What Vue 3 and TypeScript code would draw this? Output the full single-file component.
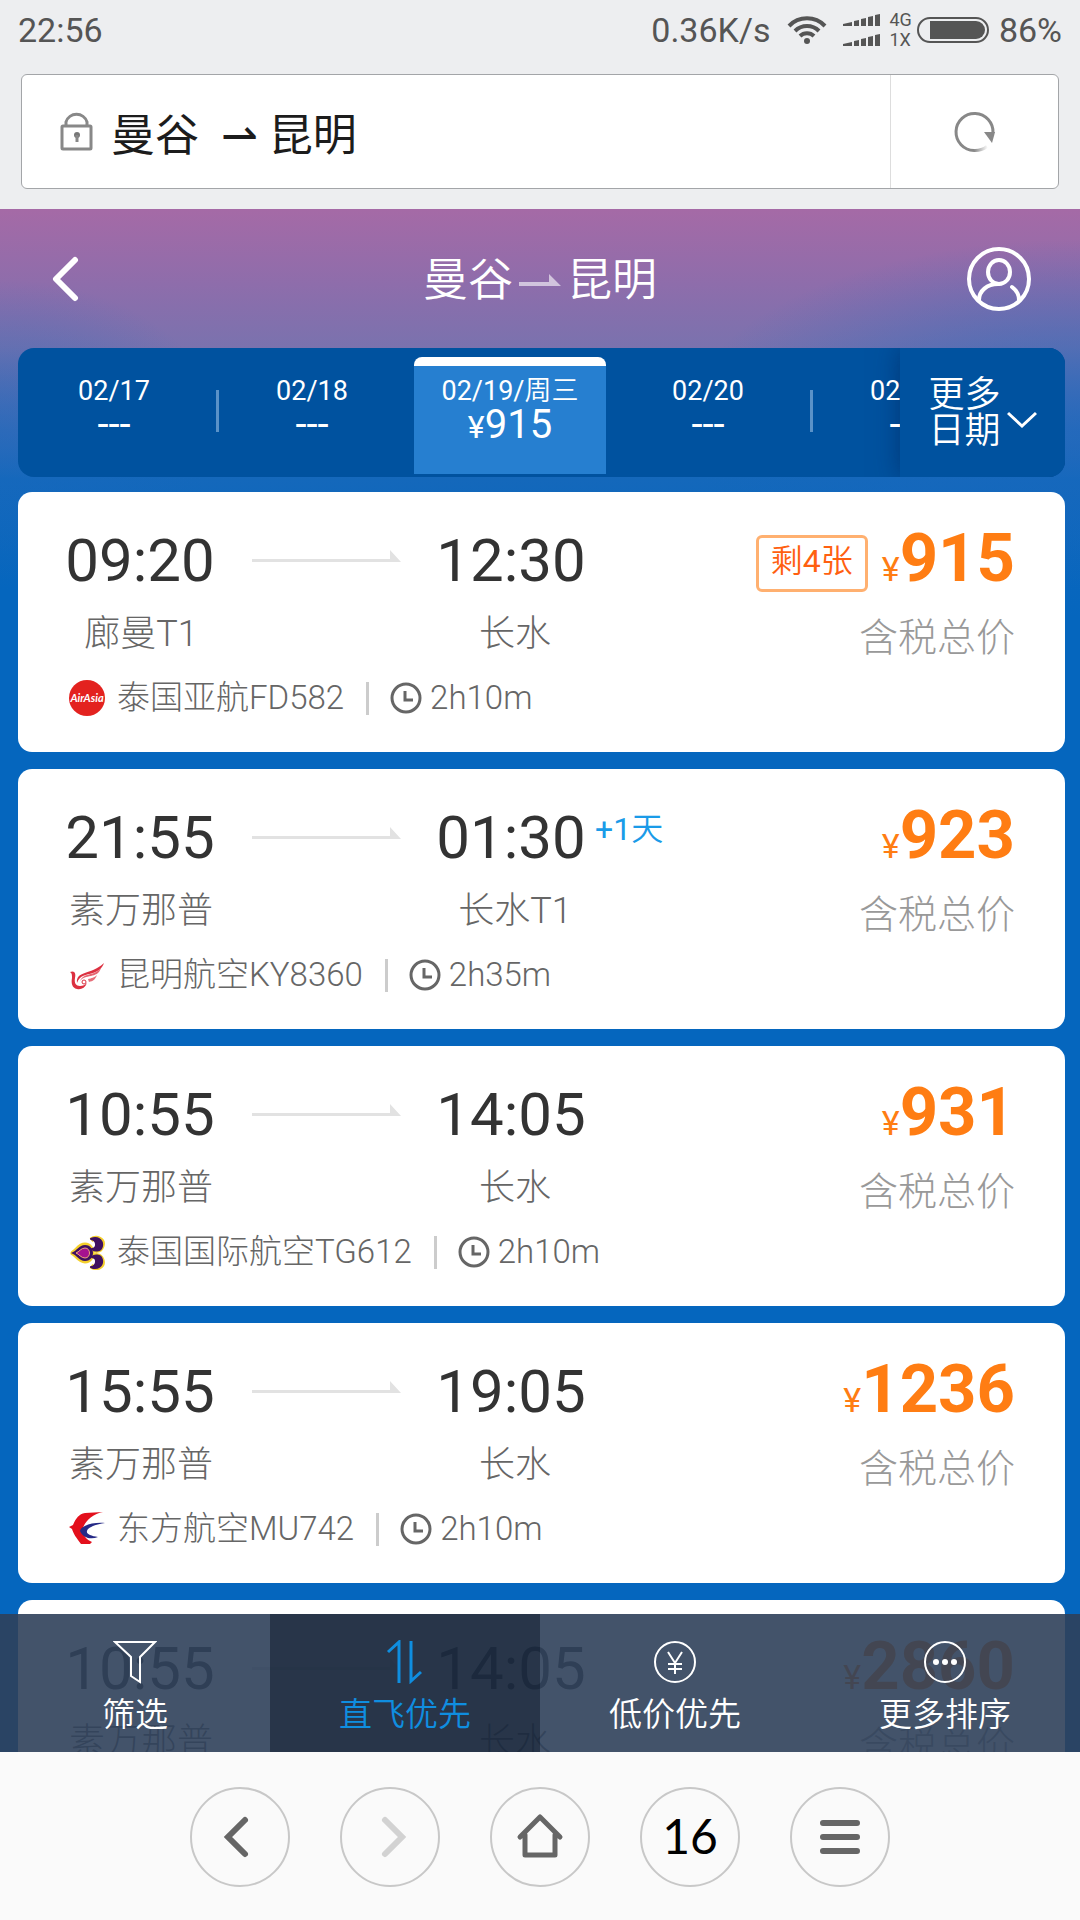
<script setup lang="ts">
import { ref } from 'vue'

type Airline = 'airasia' | 'kunming' | 'thai' | 'eastern'

interface Day {
  date: string
  price: number | null
  divider?: boolean
}

interface Flight {
  depart: string
  from: string
  arrive: string
  to: string
  plusDay?: string
  airline: string
  logo: Airline
  duration: string
  price: number
  left?: string
}

const address = ref('曼谷  ⇀ 昆明')
const activeDay = ref(2)
const activeSort = ref(1)

const days: Day[] = [
  { date: '02/17', price: null, divider: true },
  { date: '02/18', price: null },
  { date: '02/19/周三', price: 915 },
  { date: '02/20', price: null, divider: true },
  { date: '02/21', price: null },
]

const flights: Flight[] = [
  { depart: '09:20', from: '廊曼T1', arrive: '12:30', to: '长水', airline: '泰国亚航FD582', logo: 'airasia', duration: '2h10m', price: 915, left: '剩4张' },
  { depart: '21:55', from: '素万那普', arrive: '01:30', to: '长水T1', plusDay: '+1天', airline: '昆明航空KY8360', logo: 'kunming', duration: '2h35m', price: 923 },
  { depart: '10:55', from: '素万那普', arrive: '14:05', to: '长水', airline: '泰国国际航空TG612', logo: 'thai', duration: '2h10m', price: 931 },
  { depart: '15:55', from: '素万那普', arrive: '19:05', to: '长水', airline: '东方航空MU742', logo: 'eastern', duration: '2h10m', price: 1236 },
  { depart: '10:55', from: '素万那普', arrive: '14:05', to: '长水', airline: '泰国国际航空TG612', logo: 'thai', duration: '2h10m', price: 2860 },
]

const sorts = ['筛选', '直飞优先', '低价优先', '更多排序']
</script>

<template>
  <div class="screen">
    <header class="chrome">
      <div class="status">
        <span>22:56</span>
        <div class="status-right">
          <span>0.36K/s</span>
          <svg class="wifi" width="40" height="30" viewBox="0 0 40 30" fill="none" stroke="#555" stroke-width="4">
            <path d="M2 11a25 25 0 0 1 36 0" />
            <path d="M8 16a17 17 0 0 1 24 0" />
            <path d="M13 21a10 10 0 0 1 14 0" />
            <circle cx="20" cy="26" r="3" fill="#555" stroke="none" />
          </svg>
          <div class="signals">
            <svg v-for="n in 2" :key="n" width="38" height="12" viewBox="0 0 38 12" fill="#555">
              <path d="M0 12V10l9-2v4zM11 12V7l5-1v6zM18 12V5l5-1v8zM25 12V3l5-1v10zM32 12V1l5-1v12z" />
            </svg>
          </div>
          <div class="net"><span>4G</span><span>1X</span></div>
          <svg class="battery" width="72" height="28" viewBox="0 0 72 28">
            <rect x="1" y="2" width="70" height="24" rx="12" fill="none" stroke="#555" stroke-width="2" />
            <path d="M13 5h46a9 9 0 0 1 0 18H13z" fill="#555" />
          </svg>
          <span>86%</span>
        </div>
      </div>
      <div class="address">
        <svg class="lock" width="34" height="42" viewBox="0 0 34 42" fill="none" stroke="#888" stroke-width="3">
          <rect x="2" y="17" width="29" height="23" rx="1" />
          <path d="M6 17v-4a11 11 0 0 1 21 0v4" />
          <circle cx="17" cy="26" r="3" fill="#777" stroke="none" />
          <path d="M17 26v7" />
        </svg>
        <input v-model="address" type="text" aria-label="地址" />
        <button class="reload" type="button" aria-label="刷新">
          <svg width="42" height="42" viewBox="0 0 42 42" fill="none">
            <defs>
              <linearGradient id="fade" gradientUnits="userSpaceOnUse" x1="20" y1="0" x2="34" y2="0">
                <stop offset="0" stop-color="#888" />
                <stop offset="1" stop-color="#888" stop-opacity="0" />
              </linearGradient>
            </defs>
            <path d="M39 22a18.500 18.500 0 1 0-19 17.500" stroke="#888" stroke-width="3" />
            <path d="M20 39.500a20 20 0 0 0 13-4" stroke="url(#fade)" stroke-width="3" />
            <path d="M30 21h11l-1 4-2 7z" fill="#888" />
          </svg>
        </button>
      </div>
    </header>

    <main class="page">
      <div class="title-bar">
        <button class="back" type="button" aria-label="返回">
          <svg width="28" height="46" viewBox="0 0 28 46" fill="none" stroke="#fff" stroke-width="6" stroke-linecap="round" stroke-linejoin="round">
            <path d="M23 4L4 23l19 19" />
          </svg>
        </button>
        <h1>
          <span>曼谷</span>
          <svg width="42" height="14" viewBox="0 0 42 14" fill="#fff" opacity="0.6">
            <path d="M0 9h30V1l12 12H0z" />
          </svg>
          <span>昆明</span>
        </h1>
        <button class="user" type="button" aria-label="我的">
          <svg width="66" height="66" viewBox="0 0 66 66" fill="none" stroke="#fff" stroke-width="4" stroke-linecap="round">
            <circle cx="33" cy="33" r="30" />
            <ellipse cx="33" cy="26" rx="11" ry="12" />
            <path d="M13 54c0-9 8-16 19-16M46 41c4 3 7 8 7 13" />
          </svg>
        </button>
      </div>

      <nav class="dates" aria-label="日期">
        <div class="strip">
          <button
            v-for="(d, i) in days"
            :key="d.date"
            type="button"
            class="day"
            :class="{ active: i === activeDay, divided: d.divider }"
            @click="activeDay = i"
          >
            <span class="day-date">{{ d.date }}</span>
            <span v-if="d.price" class="day-price"><small>¥</small>{{ d.price }}</span>
            <span v-else class="day-price">---</span>
          </button>
        </div>
        <button class="more" type="button">
          <span>更多<br />日期</span>
          <svg width="30" height="18" viewBox="0 0 30 18" fill="none" stroke="#fff" stroke-width="3">
            <path d="M1 2l14 13L29 2" />
          </svg>
        </button>
      </nav>

      <section class="list">
        <article v-for="(f, i) in flights" :key="i" class="card">
          <div class="trip">
            <div class="route">
              <div class="stop">
                <span class="time">{{ f.depart }}</span>
                <span class="port">{{ f.from }}</span>
              </div>
              <svg class="line" width="150" height="14" viewBox="0 0 150 14" fill="#e2e2e2">
                <path d="M0 9h138V0l11 12H0z" />
              </svg>
              <div class="stop arrival">
                <span class="time">{{ f.arrive }}</span>
                <span class="port">{{ f.to }}</span>
              </div>
              <span v-if="f.plusDay" class="plus">{{ f.plusDay }}</span>
            </div>
            <div class="carrier">
              <svg v-if="f.logo === 'airasia'" class="logo" viewBox="0 0 36 36">
                <circle cx="18" cy="18" r="18" fill="#e3221f" />
                <text x="18" y="22" text-anchor="middle" font-family="Lato, sans-serif" font-size="11" font-style="italic" font-weight="700" fill="#fff">AirAsia</text>
              </svg>
              <svg v-else-if="f.logo === 'kunming'" class="logo" viewBox="0 0 36 36" fill="#dc3040">
                <path d="M1 15c5-2 6 2 5 6-1 5 1 8 5 8 3 0 5-1 7-3-2 5-6 7-10 6-5-1-6-6-5-11 0-3 0-5-2-6z" />
                <path d="M8 26c-1-13 13-7 27-20-2 6-6 8-11 10-7 2-13 2-16 10z" />
                <path d="M11 24c4-9 13-4 21-13-2 6-6 7-10 8-5 1-8 1-11 5z" opacity="0.75" />
                <path d="M19 22c4-1 6-1 9-4-2 5-4 6-8 7z" opacity="0.7" />
                <circle cx="15" cy="25" r="2" fill="none" stroke="#dc3040" stroke-width="1" />
              </svg>
              <svg v-else-if="f.logo === 'thai'" class="logo" viewBox="0 0 36 36">
                <g stroke="#f4cf2c" stroke-width="5" stroke-linejoin="round" fill="#f4cf2c">
                  <path d="M4 19c4-2 6-8 12-8 5 0 7 5 7 8s-2 8-7 8c-6 0-8-6-12-8z" />
                  <path d="M22 6c6-4 13 0 11 6s-8 5-9 2M22 32c6 4 13 0 11-6s-8-5-9-2" fill="none" />
                </g>
                <path d="M2 19c6-2 8-8 14-8 6 0 8 5 8 8s-2 8-8 8c-6 0-8-6-14-8z" fill="#3f1060" />
                <path d="M22 5c6-3 12 1 11 7s-8 5-10 3c6-1 5-9-1-10zM22 33c6 3 12-1 11-7s-8-5-10-3c6 1 5 9-1 10z" fill="#3f1060" stroke="#3f1060" stroke-width="2" stroke-linejoin="round" />
                <path d="M7 19c3-1 5-5 9-5 6 0 6 10 0 10-4 0-6-4-9-5z" fill="#a5128f" stroke="#f0a878" stroke-width="1" />
              </svg>
              <svg v-else class="logo" viewBox="0 0 36 36">
                <path d="M0 16l4-2C7 7 10 3 16 2l18-1c-10 2-18 9-20 16-1 6 3 12 9 14l-2 2h-9C8 28 4 22 3 18z" fill="#e3101c" />
                <path d="M36 12c-13-1-24 3-25 8 3 7 11 9 18 6-7-1-12-3-11-6 1-4 10-7 18-8z" fill="#262a86" />
              </svg>
              <span class="flight">{{ f.airline }}</span>
              <i class="bar"></i>
              <svg width="32" height="32" viewBox="0 0 32 32" fill="none" stroke="#666" stroke-width="3">
                <circle cx="16" cy="16" r="14" />
                <path d="M15 9v9h8" />
              </svg>
              <span class="duration">{{ f.duration }}</span>
            </div>
          </div>
          <div class="fare">
            <div class="fare-row">
              <span v-if="f.left" class="left">{{ f.left }}</span>
              <span class="price"><small>¥</small>{{ f.price }}</span>
            </div>
            <span class="tax">含税总价</span>
          </div>
        </article>
      </section>

      <nav class="sorts" aria-label="排序">
        <button
          v-for="(s, i) in sorts"
          :key="s"
          type="button"
          class="sort"
          :class="{ active: i === activeSort }"
          @click="activeSort = i"
        >
          <svg width="44" height="44" viewBox="0 0 44 44" fill="none" stroke="currentColor" stroke-width="2">
            <path v-if="i === 0" d="M2 2h40L27 17v25l-9-6V17z" />
            <path v-else-if="i === 1" d="M5 12L16 2v41M28 1v40l10-9" stroke-width="3" />
            <template v-else-if="i === 2">
              <circle cx="22" cy="22" r="20" />
              <path d="M15 12l7 11 7-11M22 23v11M15 24h14M15 29h14" />
            </template>
            <template v-else>
              <circle cx="22" cy="22" r="20" />
              <g fill="currentColor" stroke="none">
                <circle cx="13" cy="22" r="3" />
                <circle cx="22" cy="22" r="3" />
                <circle cx="31" cy="22" r="3" />
              </g>
            </template>
          </svg>
          <span>{{ s }}</span>
        </button>
      </nav>
    </main>

    <footer class="tools">
      <button type="button" aria-label="后退">
        <svg width="44" height="44" viewBox="0 0 44 44" fill="none" stroke="#666" stroke-width="6" stroke-linecap="round">
          <path d="M27 5L10 22l17 17" />
        </svg>
      </button>
      <button type="button" aria-label="前进" disabled>
        <svg width="44" height="44" viewBox="0 0 44 44" fill="none" stroke="#d2d2d2" stroke-width="6" stroke-linecap="round">
          <path d="M17 5l17 17-17 17" />
        </svg>
      </button>
      <button type="button" aria-label="主页">
        <svg width="48" height="48" viewBox="0 0 48 48" fill="none" stroke="#666" stroke-width="5" stroke-linecap="round" stroke-linejoin="round">
          <path d="M4 24L24 4l20 20M9 22v20h30V22" />
        </svg>
      </button>
      <button type="button" class="tabs" aria-label="标签页 16">16</button>
      <button type="button" aria-label="菜单">
        <svg width="44" height="44" viewBox="0 0 44 44" fill="none" stroke="#666" stroke-width="6" stroke-linecap="round">
          <path d="M5 8h34M5 22h34M5 36h34" />
        </svg>
      </button>
    </footer>
  </div>
</template>

<style>
body {
  margin: 0;
}
</style>

<style scoped>
.screen {
  display: flex;
  flex-direction: column;
  height: 100vh;
  overflow: hidden;
  background: #fafafa;
  font-family: Roboto, 'Noto Sans CJK SC', sans-serif;
  color: #333;
}

button,
input {
  margin: 0;
  padding: 0;
  border: 0;
  background: none;
  color: inherit;
  font: inherit;
}

svg {
  display: block;
  flex: none;
}

.chrome {
  flex: none;
  padding-bottom: 20px;
  background: #edeef0;
}

.status {
  display: flex;
  justify-content: space-between;
  align-items: center;
  height: 60px;
  margin-bottom: 14px;
  padding: 0 18px;
  color: #555;
  font-size: 34px;
}

.status-right {
  display: flex;
  align-items: center;
}

.wifi {
  margin: 0 16px 0 17px;
}

.signals {
  display: flex;
  flex-direction: column;
  gap: 8px;
}

.net {
  display: flex;
  flex-direction: column;
  margin: 0 5px 0 8px;
  font-size: 18px;
  line-height: 20px;
}

.battery {
  margin-right: 10px;
}

.address {
  display: flex;
  align-items: center;
  box-sizing: border-box;
  height: 115px;
  margin: 0 21px;
  padding-left: 38px;
  border: 1px solid #a3a5a8;
  border-radius: 6px;
  background: #fff;
}

.lock {
  margin-bottom: 4px;
}

.address input {
  flex: 1;
  min-width: 0;
  height: 100%;
  margin-left: 17px;
  outline: none;
  color: #1c1c1c;
  font-size: 44px;
}

.reload {
  display: flex;
  align-items: center;
  justify-content: center;
  width: 168px;
  height: 100%;
  border-left: 1px solid #ddd;
}

.page {
  position: relative;
  display: flex;
  flex: 1;
  flex-direction: column;
  min-height: 0;
  overflow: hidden;
  background:
    radial-gradient(220px 150px at 0 220px, rgba(24, 104, 190, 0.5), transparent),
    radial-gradient(400px 190px at 100% 220px, rgba(24, 104, 190, 0.7), transparent),
    linear-gradient(#a56aa6 0, #8e6dab 75px, #7a72ae 139px, #4a6db4 210px, #1468bb 270px, #0566be 380px);
}

.title-bar {
  display: flex;
  flex: none;
  align-items: center;
  justify-content: space-between;
  height: 139px;
  padding: 0 48px 0 52px;
}

.back,
.user {
  width: 66px;
}

h1 {
  display: flex;
  align-items: center;
  gap: 6px;
  margin: 0 4px 4px 0;
  color: #fff;
  font-size: 45px;
  font-weight: 350;
}

h1 svg {
  margin-top: 6px;
}

.dates {
  display: flex;
  flex: none;
  height: 129px;
  margin: 0 15px 0 18px;
  overflow: hidden;
  border-radius: 16px;
  background: #00529f;
  color: #fff;
}

.strip {
  display: flex;
  flex: 1;
  gap: 6px;
  min-width: 0;
  overflow: hidden;
}

.day {
  position: relative;
  display: flex;
  flex: none;
  flex-direction: column;
  align-items: center;
  box-sizing: border-box;
  width: 192px;
  margin: 9px 0 3px;
  padding-top: 9px;
  border-top: 9px solid transparent;
  border-radius: 8px 8px 0 0;
}

.day.active {
  border-top-color: #fff;
  background: #267fd0;
}

.day.divided::after {
  position: absolute;
  top: 24px;
  right: -9px;
  width: 3px;
  height: 42px;
  background: #5a92c8;
  content: '';
}

.day-date {
  font-family: Roboto, 'Noto Sans CJK SC DemiLight', 'Noto Sans CJK SC', sans-serif;
  font-size: 27px;
  line-height: 32px;
}

.day-price {
  font-size: 40px;
  line-height: 36px;
}

.day-price small {
  font-size: 32px;
}

.more {
  display: flex;
  align-items: center;
  justify-content: center;
  gap: 6px;
  width: 165px;
  background: #00529f;
  box-shadow: 0 0 24px rgba(0, 30, 80, 0.5);
  font-size: 36px;
  font-weight: 350;
  line-height: 36px;
}

.more svg {
  margin-top: 14px;
}

.list {
  display: flex;
  flex-direction: column;
  gap: 17px;
  margin: 15px 15px 0 18px;
}

.card {
  display: flex;
  justify-content: space-between;
  padding: 32px 50px 32px 48px;
  border-radius: 14px;
  background: #fff;
}

.route {
  display: flex;
  align-items: flex-start;
}

.stop {
  display: flex;
  flex-direction: column;
  align-items: center;
  width: 148px;
}

.time {
  color: #333;
  font-size: 60px;
  line-height: 74px;
}

.line {
  margin: 26px 35px 0 38px;
}

.port {
  margin-top: 11px;
  padding-left: 2px;
  color: #666;
  font-size: 36px;
  font-weight: 300;
  line-height: 50px;
  white-space: nowrap;
}

.arrival .port {
  padding-left: 8px;
}

.plus {
  margin-left: 10px;
  color: #1a9be8;
  font-family: Roboto, 'Noto Sans CJK SC DemiLight', 'Noto Sans CJK SC', sans-serif;
  font-size: 32px;
  line-height: 56px;
}

.carrier {
  display: flex;
  align-items: center;
  height: 44px;
  margin-top: 17px;
  color: #666;
  font-size: 33px;
  font-weight: 300;
  line-height: 44px;
}

.logo {
  width: 36px;
  height: 36px;
  margin: 0 12px 0 3px;
}

.bar {
  width: 3px;
  height: 33px;
  margin: 0 21px 0 22px;
  background: #ccc;
}

.duration {
  margin-left: 8px;
}

.fare {
  display: flex;
  flex-direction: column;
  align-items: flex-end;
}

.fare-row {
  display: flex;
  align-items: flex-end;
  height: 68px;
}

.left {
  box-sizing: border-box;
  height: 57px;
  margin-right: 14px;
  padding: 0 12px;
  border: 3px solid #ffb070;
  border-radius: 6px;
  color: #ff6010;
  font-family: Roboto, 'Noto Sans CJK SC DemiLight', 'Noto Sans CJK SC', sans-serif;
  font-size: 32px;
  line-height: 46px;
}

.price {
  color: #ff7d13;
  font-size: 67px;
  font-weight: 700;
  line-height: 68px;
}

.price small {
  font-size: 34px;
  font-weight: 400;
  line-height: 1;
}

.tax {
  margin-top: 21px;
  color: #999;
  font-size: 39px;
  font-weight: 300;
  line-height: 50px;
}

.sorts {
  position: absolute;
  right: 0;
  bottom: 0;
  left: 0;
  display: flex;
  background: rgba(47, 64, 90, 0.9);
  color: #fff;
}

.sort {
  display: flex;
  flex: 1;
  flex-direction: column;
  align-items: center;
  padding: 26px 0 15px;
  font-size: 33px;
  font-weight: 350;
  line-height: 44px;
}

.sort span {
  margin-top: 9px;
}

.sort.active {
  background: rgba(0, 10, 24, 0.4);
  color: #0f8ee0;
}

.tools {
  display: flex;
  flex: none;
  align-items: center;
  justify-content: center;
  gap: 50px;
  box-sizing: border-box;
  height: 168px;
  padding-top: 2px;
  background: #fafafa;
}

.tools button {
  display: flex;
  align-items: center;
  justify-content: center;
  box-sizing: border-box;
  width: 100px;
  height: 100px;
  border: 2px solid #c8c8c8;
  border-radius: 50%;
}

.tools .tabs {
  padding-bottom: 4px;
  color: #000;
  font-family: Lato, sans-serif;
  font-size: 48px;
}
</style>
